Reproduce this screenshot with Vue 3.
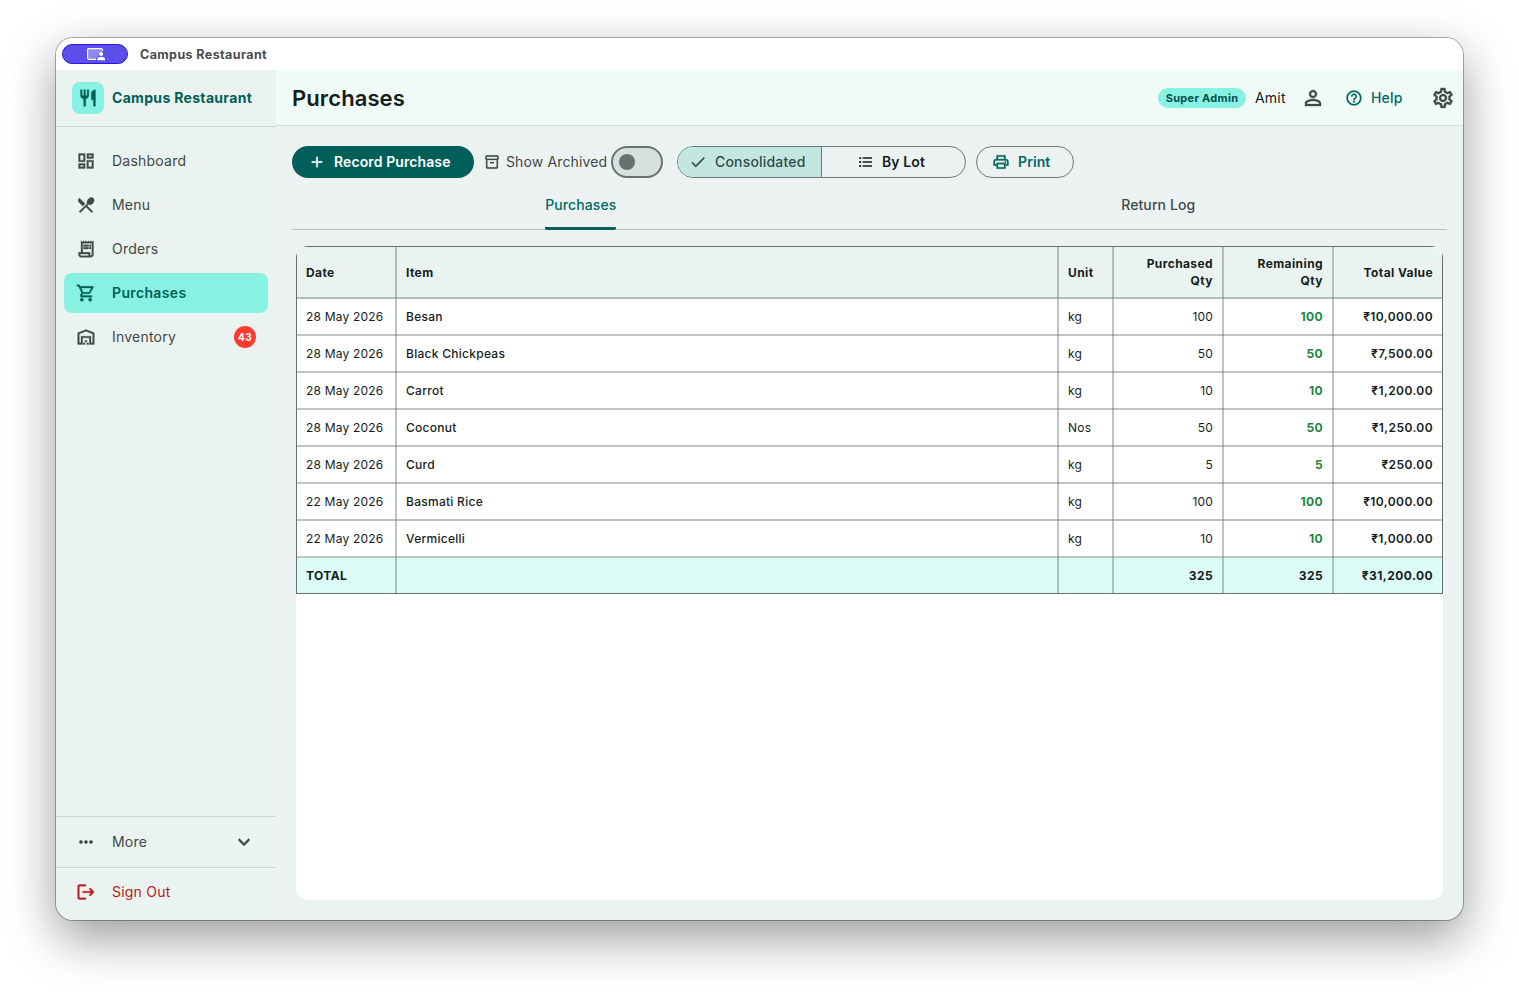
<template>
	<div class="desktop">
		<div class="window">
			<div class="titlebar">
				<div class="titlebar__pill">
					<svg class="titlebar__glyph" viewBox="0 0 20 14">
						<path d="M10 12.3H2.8a1.2 1.2 0 0 1-1.2-1.2V2.8a1.2 1.2 0 0 1 1.2-1.2h12.4a1.2 1.2 0 0 1 1.2 1.2V4" class="titlebar__screen" />
						<path d="M11.2 13.2c0-2.4 1.3-3.5 4-3.5s4 1.1 4 3.5z" class="titlebar__person" />
						<circle cx="15.2" cy="7" r="2" class="titlebar__person" />
					</svg>
				</div>
				<span class="titlebar__title">Campus Restaurant</span>
			</div>

			<div class="app">
				<aside class="sidebar">
					<div class="brand">
						<div class="brand__logo">
							<svg class="icon icon--20" viewBox="0 0 24 24"><path :d="icons.restaurant" /></svg>
						</div>
						<span class="brand__name">Campus Restaurant</span>
					</div>

					<nav class="nav">
						<a
							v-for="item in navItems"
							:key="item.label"
							class="nav__item"
							:class="{ 'nav__item--active': item.label === activeItem }"
							@click="activeItem = item.label"
						>
							<svg class="icon icon--20" viewBox="0 0 24 24"><path :d="icons[item.icon]" /></svg>
							<span class="nav__label">{{ item.label }}</span>
							<span v-if="item.badge" class="nav__badge">{{ item.badge }}</span>
						</a>
					</nav>

					<div class="sidebar__more">
						<svg class="icon icon--20" viewBox="0 0 24 24"><path :d="icons.more" /></svg>
						<span class="nav__label">More</span>
						<svg class="icon icon--24" viewBox="0 0 24 24"><path :d="icons.expand" /></svg>
					</div>
					<div class="sidebar__signout">
						<svg class="icon icon--20" viewBox="0 0 24 24"><path :d="icons.logout" /></svg>
						<span class="nav__label">Sign Out</span>
					</div>
				</aside>

				<main class="main">
					<header class="header">
						<h1 class="header__title">Purchases</h1>
						<span class="header__role">Super Admin</span>
						<span class="header__user">Amit</span>
						<svg class="icon icon--24 header__person" viewBox="0 0 24 24"><path :d="icons.person" /></svg>
						<a class="header__help">
							<svg class="icon icon--18" viewBox="0 0 24 24"><path :d="icons.help" /></svg>
							<span>Help</span>
						</a>
						<svg class="icon icon--24 header__settings" viewBox="0 0 24 24"><path :d="icons.settings" /></svg>
					</header>

					<div class="toolbar">
						<button class="button button--filled">
							<svg class="icon icon--18" viewBox="0 0 24 24"><path :d="icons.add" /></svg>
							<span class="button__label">Record Purchase</span>
						</button>
						<div class="archived">
							<svg class="icon icon--16" viewBox="0 0 24 24"><path :d="icons.archive" /></svg>
							<span class="archived__label">Show Archived</span>
							<button
								class="switch"
								:class="{ 'switch--on': showArchived }"
								aria-label="Show archived"
								@click="showArchived = !showArchived"
							>
								<span class="switch__thumb"></span>
							</button>
						</div>
						<div class="segments">
							<button class="segments__item segments__item--selected">
								<svg class="icon icon--18" viewBox="0 0 24 24"><path :d="icons.check" /></svg>
								<span class="button__label">Consolidated</span>
							</button>
							<button class="segments__item segments__item--lot">
								<svg class="icon icon--18 icon--plain" viewBox="0 0 24 24"><path :d="icons.list" /></svg>
								<span class="button__label">By Lot</span>
							</button>
						</div>
						<button class="button button--outlined">
							<svg class="icon icon--18" viewBox="0 0 24 24"><path :d="icons.print" /></svg>
							<span class="button__label">Print</span>
						</button>
					</div>

					<div class="tabs">
						<div class="tabs__tab">
							<span class="tabs__label tabs__label--active">Purchases</span>
						</div>
						<div class="tabs__tab">
							<span class="tabs__label">Return Log</span>
						</div>
					</div>

					<section class="card">
						<div class="table">
							<div class="table__row table__row--head">
								<div class="cell">Date</div>
								<div class="cell">Item</div>
								<div class="cell">Unit</div>
								<div class="cell cell--right">Purchased<br />Qty</div>
								<div class="cell cell--right">Remaining<br />Qty</div>
								<div class="cell cell--right">Total Value</div>
							</div>
							<div v-for="row in rows" :key="row.item" class="table__row">
								<div class="cell">{{ row.date }}</div>
								<div class="cell cell--item">{{ row.item }}</div>
								<div class="cell">{{ row.unit }}</div>
								<div class="cell cell--right">{{ row.qty }}</div>
								<div class="cell cell--right cell--remaining">{{ row.qty }}</div>
								<div class="cell cell--right cell--value">{{ money(row.value) }}</div>
							</div>
							<div class="table__row table__row--total">
								<div class="cell">TOTAL</div>
								<div class="cell"></div>
								<div class="cell"></div>
								<div class="cell cell--right">{{ totalQty }}</div>
								<div class="cell cell--right">{{ totalQty }}</div>
								<div class="cell cell--right">{{ money(totalValue) }}</div>
							</div>
						</div>
					</section>
				</main>
			</div>
		</div>
	</div>
</template>

<script setup>
import { computed, ref } from 'vue';

const activeItem = ref('Purchases');
const showArchived = ref(false);

const navItems = [
	{ label: 'Dashboard', icon: 'dashboard' },
	{ label: 'Menu', icon: 'menu' },
	{ label: 'Orders', icon: 'orders' },
	{ label: 'Purchases', icon: 'cart' },
	{ label: 'Inventory', icon: 'warehouse', badge: 43 },
];

const rows = [
	{ date: '28 May 2026', item: 'Besan', unit: 'kg', qty: 100, value: 10000 },
	{ date: '28 May 2026', item: 'Black Chickpeas', unit: 'kg', qty: 50, value: 7500 },
	{ date: '28 May 2026', item: 'Carrot', unit: 'kg', qty: 10, value: 1200 },
	{ date: '28 May 2026', item: 'Coconut', unit: 'Nos', qty: 50, value: 1250 },
	{ date: '28 May 2026', item: 'Curd', unit: 'kg', qty: 5, value: 250 },
	{ date: '22 May 2026', item: 'Basmati Rice', unit: 'kg', qty: 100, value: 10000 },
	{ date: '22 May 2026', item: 'Vermicelli', unit: 'kg', qty: 10, value: 1000 },
];

const totalQty = computed(() => rows.reduce((sum, row) => sum + row.qty, 0));
const totalValue = computed(() => rows.reduce((sum, row) => sum + row.value, 0));

const money = (value) => '₹' + value.toLocaleString('en-US', { minimumFractionDigits: 2 });

// Icon outlines on a 24 unit grid
const icons = {
	restaurant: 'M11 9H9V2H7v7H5V2H3v7c0 2.12 1.66 3.84 3.75 3.97V22h2.5v-9.03C11.34 12.84 13 11.12 13 9V2h-2v7zm5-3v8h2.5v8H21V2c-2.76 0-5 2.24-5 4z',
	dashboard: 'M19 5v2h-4V5h4M9 5v6H5V5h4m10 8v6h-4v-6h4M9 17v2H5v-2h4M21 3h-8v6h8V3zM11 3H3v10h8V3zm10 8h-8v10h8V11zm-10 4H3v6h8v-6z',
	menu: 'M8.1 13.34l2.83-2.83L3.91 3.5a4.008 4.008 0 0 0 0 5.66l4.19 4.18zm6.78-1.81c1.53.71 3.68.21 5.27-1.38 1.91-1.91 2.28-4.65.81-6.12-1.46-1.46-4.2-1.1-6.12.81-1.59 1.59-2.09 3.74-1.38 5.27L3.7 19.87l1.41 1.41L12 14.41l6.88 6.88 1.41-1.41L13.41 13l1.47-1.47z',
	orders: 'M19.5 3.5L18 2l-1.5 1.5L15 2l-1.5 1.5L12 2l-1.5 1.5L9 2 7.5 3.5 6 2v14H3v3c0 1.66 1.34 3 3 3h12c1.66 0 3-1.34 3-3V2l-1.5 1.5zM15 20H6c-.55 0-1-.45-1-1v-1h10v2zm4-1c0 .55-.45 1-1 1s-1-.45-1-1v-3H8V5h11v14zM9 7h6v2H9zM16 7h2v2h-2zM9 10h6v2H9zM16 10h2v2h-2z',
	cart: 'M15.55 13c.75 0 1.41-.41 1.75-1.03l3.58-6.49A.996.996 0 0 0 20.01 4H5.21l-.94-2H1v2h2l3.6 7.59-1.35 2.44C4.52 15.37 5.48 17 7 17h12v-2H7l1.1-2h7.45zM6.16 6h12.15l-2.76 5H8.53L6.16 6zM7 18c-1.1 0-1.99.9-1.99 2S5.9 22 7 22s2-.9 2-2-.9-2-2-2zm10 0c-1.1 0-1.99.9-1.99 2s.89 2 1.99 2 2-.9 2-2-.9-2-2-2z',
	warehouse: 'M20 8.35V19h-2v-8H6v8H4V8.35l8-3.2 8 3.2zM22 21V7L12 3 2 7v14h6v-8h8v8h6zM11 19H9v2h2v-2zm2-3h-2v2h2v-2zm2 3h-2v2h2v-2z',
	more: 'M6 10c-1.1 0-2 .9-2 2s.9 2 2 2 2-.9 2-2-.9-2-2-2zm12 0c-1.1 0-2 .9-2 2s.9 2 2 2 2-.9 2-2-.9-2-2-2zm-6 0c-1.1 0-2 .9-2 2s.9 2 2 2 2-.9 2-2-.9-2-2-2z',
	expand: 'M16.59 8.59L12 13.17 7.41 8.59 6 10l6 6 6-6z',
	logout: 'M17 7l-1.41 1.41L18.17 11H8v2h10.17l-2.58 2.58L17 17l5-5zM4 5h8V3H4c-1.1 0-2 .9-2 2v14c0 1.1.9 2 2 2h8v-2H4V5z',
	person: 'M12 5.9a2.1 2.1 0 1 1 0 4.2 2.1 2.1 0 0 1 0-4.2m0 9c2.97 0 6.1 1.46 6.1 2.1v1.1H5.9V17c0-.64 3.13-2.1 6.1-2.1M12 4C9.79 4 8 5.79 8 8s1.79 4 4 4 4-1.79 4-4-1.79-4-4-4zm0 9c-2.67 0-8 1.34-8 4v3h16v-3c0-2.66-5.33-4-8-4z',
	help: 'M11 18h2v-2h-2v2zm1-16C6.48 2 2 6.48 2 12s4.48 10 10 10 10-4.48 10-10S17.52 2 12 2zm0 18c-4.41 0-8-3.59-8-8s3.59-8 8-8 8 3.59 8 8-3.59 8-8 8zm0-14c-2.21 0-4 1.79-4 4h2c0-1.1.9-2 2-2s2 .9 2 2c0 2-3 1.75-3 5h2c0-2.25 3-2.5 3-5 0-2.21-1.79-4-4-4z',
	settings: 'M19.43 12.98c.04-.32.07-.64.07-.98 0-.34-.03-.66-.07-.98l2.11-1.65c.19-.15.24-.42.12-.64l-2-3.46a.5.5 0 0 0-.61-.22l-2.49 1c-.52-.4-1.08-.73-1.69-.98l-.38-2.65A.488.488 0 0 0 14 2h-4c-.25 0-.46.18-.49.42l-.38 2.65c-.61.25-1.17.59-1.69.98l-2.49-1a.566.566 0 0 0-.18-.03c-.17 0-.34.09-.43.25l-2 3.46c-.13.22-.07.49.12.64l2.11 1.65c-.04.32-.07.65-.07.98 0 .33.03.66.07.98l-2.11 1.65c-.19.15-.24.42-.12.64l2 3.46a.5.5 0 0 0 .61.22l2.49-1c.52.4 1.08.73 1.69.98l.38 2.65c.03.24.24.42.49.42h4c.25 0 .46-.18.49-.42l.38-2.65c.61-.25 1.17-.59 1.69-.98l2.49 1c.06.02.12.03.18.03.17 0 .34-.09.43-.25l2-3.46c.12-.22.07-.49-.12-.64l-2.11-1.65zm-1.98-1.71c.04.31.05.52.05.73 0 .21-.02.43-.05.73l-.14 1.13.89.7 1.08.84-.7 1.21-1.27-.51-1.04-.42-.9.68c-.43.32-.84.56-1.25.73l-1.06.43-.16 1.13-.2 1.35h-1.4l-.19-1.35-.16-1.13-1.06-.43c-.43-.18-.83-.41-1.23-.71l-.91-.7-1.06.43-1.27.51-.7-1.21 1.08-.84.89-.7-.14-1.13c-.03-.31-.05-.54-.05-.74s.02-.43.05-.73l.14-1.13-.89-.7-1.08-.84.7-1.21 1.27.51 1.04.42.9-.68c.43-.32.84-.56 1.25-.73l1.06-.43.16-1.13.2-1.35h1.39l.19 1.35.16 1.13 1.06.43c.43.18.83.41 1.23.71l.91.7 1.06-.43 1.27-.51.7 1.21-1.07.85-.89.7.14 1.13zM12 8c-2.21 0-4 1.79-4 4s1.79 4 4 4 4-1.79 4-4-1.79-4-4-4zm0 6c-1.1 0-2-.9-2-2s.9-2 2-2 2 .9 2 2-.9 2-2 2z',
	add: 'M19 13h-6v6h-2v-6H5v-2h6V5h2v6h6v2z',
	archive: 'M20 2H4c-1 0-2 .9-2 2v3.01c0 .72.43 1.34 1 1.69V20c0 1.1 1.1 2 2 2h14c.9 0 2-.9 2-2V8.7c.57-.35 1-.97 1-1.69V4c0-1.1-1-2-2-2zm-1 18H5V9h14v11zm1-13H4V4h16v3zM9 12h6v2H9z',
	check: 'M9 16.17L4.83 12l-1.42 1.41L9 19 21 7l-1.41-1.41z',
	list: 'M3 5.5h2.5V8H3zM3 10.75h2.5v2.5H3zM3 16h2.5v2.500H3zM7.500 5.75H20v2H7.500zM7.500 11H20v2H7.500zM7.500 16.250H20v2H7.500z',
	print: 'M19 8h-1V3H6v5H5c-1.66 0-3 1.34-3 3v6h4v4h12v-4h4v-6c0-1.66-1.34-3-3-3zM8 5h8v3H8V5zm8 12v2H8v-4h8v2zm2-2v-2H6v2H4v-4c0-.55.45-1 1-1h14c.55 0 1 .45 1 1v4h-2zM19 11.5a1 1 0 1 1-2 0 1 1 0 0 1 2 0z',
};
</script>

<style>
body {
	margin: 0;
	background: #fff;
}
</style>

<style scoped>
.desktop {
	box-sizing: border-box;
	width: 1519px;
	height: 994px;
	padding: 38px 56px 74px;
	overflow: hidden;
	font-family: Inter, 'Noto Sans', sans-serif;
	font-size: 14px;
	color: #161d1b;
}

.desktop * {
	box-sizing: border-box;
}

.window {
	display: flex;
	flex-direction: column;
	width: 1407px;
	height: 882px;
	border-radius: 17px;
	overflow: hidden;
	background: #ecf2f2;
	box-shadow: 0 0 0 1px rgba(0, 0, 0, 0.3), 0 18px 50px rgba(0, 0, 0, 0.4);
}

.icon {
	display: block;
	flex: none;
	fill: currentColor;
	stroke: currentColor;
	stroke-width: 0.35;
}

.icon--plain {
	stroke: none;
}

.icon--16 {
	width: 16px;
	height: 16px;
}

.icon--18 {
	width: 18px;
	height: 18px;
}

.icon--20 {
	width: 20px;
	height: 20px;
}

.icon--24 {
	width: 24px;
	height: 24px;
}

.titlebar {
	display: flex;
	align-items: center;
	flex: none;
	height: 32px;
	padding-left: 6px;
	background: #fff;
}

.titlebar__pill {
	display: flex;
	align-items: center;
	justify-content: center;
	width: 66px;
	height: 20px;
	border: 1px solid #2f17e0;
	border-radius: 10px;
	background: #5b4eeb;
}

.titlebar__glyph {
	width: 20px;
	height: 14px;
	margin-left: 2px;
}

.titlebar__screen {
	fill: #8f86f2;
	stroke: #fff;
	stroke-width: 1.2;
}

.titlebar__person {
	fill: #fff;
}

.titlebar__title {
	margin-left: 12px;
	padding-top: 1px;
	font-size: 12.5px;
	font-weight: 700;
	letter-spacing: 0.4px;
	color: #4c4c4c;
}

.app {
	display: flex;
	flex: 1;
	min-height: 0;
}

.sidebar {
	display: flex;
	flex-direction: column;
	width: 220px;
	flex: none;
	background: #eaf3f0;
	color: #3f4946;
}

.brand {
	display: flex;
	align-items: center;
	gap: 8px;
	height: 57px;
	padding: 0 16px;
	border-bottom: 1px solid #cbd5d2;
}

.brand__logo {
	display: flex;
	align-items: center;
	justify-content: center;
	width: 32px;
	height: 32px;
	border-radius: 8px;
	background: #87f1e2;
	color: #005f58;
}

.brand__name {
	padding-bottom: 1px;
	font-weight: 700;
	letter-spacing: 0.32px;
	color: #005f58;
}

.nav {
	display: flex;
	flex-direction: column;
	flex: 1;
	gap: 4px;
	padding: 14px 8px;
}

.nav__item {
	display: flex;
	align-items: center;
	gap: 16px;
	height: 40px;
	padding: 0 12px;
	border-radius: 8px;
	cursor: pointer;
}

.nav__item--active {
	background: #87f1e2;
	color: #005f58;
	font-weight: 600;
}

.nav__label {
	flex: 1;
	padding-bottom: 2px;
	letter-spacing: 0.22px;
}

.nav__item--active .nav__label {
	letter-spacing: 0.35px;
}

.nav__badge {
	width: 22px;
	height: 22px;
	border-radius: 50%;
	background: #ff3b30;
	color: #fff;
	font-size: 10px;
	font-weight: 700;
	line-height: 22px;
	letter-spacing: 0.5px;
	text-align: center;
}

.sidebar__more,
.sidebar__signout {
	display: flex;
	align-items: center;
	gap: 16px;
	height: 51px;
	padding: 0 20px;
	border-top: 1px solid #cbd5d2;
}

.sidebar__signout {
	height: 53px;
	padding-bottom: 4px;
	color: #ba1a1a;
}

.main {
	display: flex;
	flex-direction: column;
	flex: 1;
	min-width: 0;
}

.header {
	display: flex;
	align-items: center;
	height: 56px;
	padding: 0 8px 0 16px;
	border-bottom: 1px solid #d5dedb;
	background: #f0faf7;
}

.header__title {
	flex: 1;
	margin: 0;
	font-size: 22px;
	font-weight: 600;
	letter-spacing: 0.1px;
}

.header__role {
	width: 88px;
	height: 20px;
	border-radius: 10px;
	background: #87f1e2;
	color: #00504a;
	font-size: 11px;
	font-weight: 700;
	line-height: 20px;
	letter-spacing: 0.3px;
	text-align: center;
}

.header__user {
	width: 47px;
	padding-left: 9px;
	letter-spacing: 0.2px;
}

.header__person {
	margin-left: 8px;
	color: #3f4946;
}

.header__help {
	display: flex;
	align-items: center;
	gap: 8px;
	width: 86px;
	padding-left: 20px;
	color: #006a62;
	font-weight: 500;
	letter-spacing: 0.2px;
}

.header__settings {
	margin-left: 20px;
	color: #3f4946;
}

.toolbar {
	display: flex;
	align-items: center;
	height: 32px;
	margin: 20px 16px 0;
}

.button,
.segments__item {
	display: flex;
	align-items: center;
	gap: 8px;
	height: 32px;
	padding: 0;
	border: 0;
	background: none;
	font: 500 14px Inter, sans-serif;
	letter-spacing: 0.1px;
	white-space: nowrap;
	cursor: pointer;
}

.button__label {
	padding-bottom: 1px;
}

.button--filled {
	width: 182px;
	padding-left: 16px;
	border-radius: 16px;
	background: #005f58;
	color: #fff;
	font-weight: 600;
}

.button--outlined {
	width: 98px;
	margin-left: 10px;
	padding-left: 15px;
	border: 1px solid #6f7977;
	border-radius: 16px;
	color: #006a62;
	font-weight: 600;
}

.archived {
	display: flex;
	align-items: center;
	width: 179px;
	margin-left: 10px;
	color: #3f4946;
}

.archived__label {
	width: 105px;
	margin-left: 6px;
	padding-bottom: 2px;
	letter-spacing: 0.14px;
	white-space: nowrap;
}

.switch {
	display: flex;
	align-items: center;
	width: 52px;
	height: 32px;
	padding: 0 6px;
	border: 2px solid #68716f;
	border-radius: 16px;
	background: #d8e0de;
}

.switch--on {
	justify-content: flex-end;
	background: #87f1e2;
}

.switch__thumb {
	width: 16px;
	height: 16px;
	border-radius: 50%;
	background: #68716f;
}

.segments {
	display: grid;
	grid-template-columns: 144px 143px;
	width: 289px;
	height: 32px;
	margin-left: 14px;
	border: 1px solid #6f7977;
	border-radius: 16px;
	overflow: hidden;
}

.segments__item {
	height: 30px;
	padding-left: 11px;
	color: #161d1b;
}

.segments__item--selected {
	border-right: 1px solid #6f7977;
	background: #c3e6df;
	color: #324b47;
	letter-spacing: 0.18px;
}

.segments__item--lot {
	gap: 7px;
	padding-left: 35px;
	font-weight: 600;
}

.tabs {
	display: flex;
	height: 49px;
	margin: 3px 16px 0;
	border-bottom: 1px solid #b7c1be;
}

.tabs__tab {
	display: flex;
	flex: 1;
	justify-content: center;
	height: 49px;
}

.tabs__label {
	height: 49px;
	line-height: 48px;
	font-weight: 500;
	letter-spacing: 0.1px;
	color: #3f4946;
}

.tabs__label--active {
	border-bottom: 3px solid #005f58;
	border-radius: 2px;
	color: #006a62;
}

.card {
	width: 1147px;
	height: 654px;
	margin: 16px 0 0 20px;
	border-radius: 12px;
	overflow: hidden;
	background: #fff;
}

.table {
	border: 1px solid #65706d;
	font-size: 12px;
	letter-spacing: 0.2px;
}

.table__row {
	display: grid;
	grid-template-columns: 100px 662px 55px 110px 110px 108px;
	height: 37px;
}

/* Both rules are translucent so they darken where they cross */
.cell {
	display: flex;
	align-items: center;
	padding: 0 11px 2px 9px;
	line-height: 17px;
	box-shadow: inset -2px 0 0 rgba(95, 110, 106, 0.4), inset 0 -2px 0 rgba(95, 110, 106, 0.4);
}

.cell--right {
	justify-content: flex-end;
	text-align: right;
}

.cell:last-child {
	padding-right: 9px;
	box-shadow: inset 0 -2px 0 rgba(95, 110, 106, 0.4);
}

.cell--item {
	font-weight: 500;
	letter-spacing: 0.27px;
}

.cell--remaining {
	color: #1b873a;
	font-weight: 700;
	letter-spacing: 0.4px;
}

.cell--value {
	font-weight: 600;
	letter-spacing: 0.42px;
}

.table__row--head {
	height: 52px;
	background: #eaf3f0;
	font-weight: 700;
	letter-spacing: 0.4px;
}

.table__row--total {
	height: 35px;
	background: #dcfbf6;
	font-weight: 700;
	letter-spacing: 0.42px;
}

.table__row--total .cell {
	padding-bottom: 0;
	box-shadow: inset -2px 0 0 rgba(95, 110, 106, 0.4);
}

.table__row--total .cell:last-child {
	box-shadow: none;
}
</style>
